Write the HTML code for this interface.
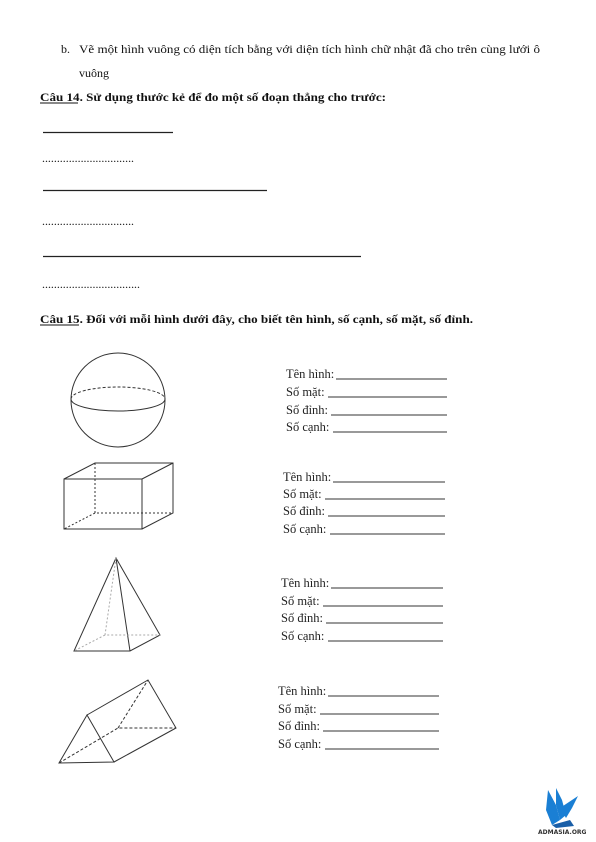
<!DOCTYPE html>
<html><head><meta charset="utf-8"><style>
html,body{margin:0;padding:0;background:#fff;}
svg{display:block}
.t{font-family:"Liberation Serif",serif;font-size:12px;fill:#111}
.b{font-weight:bold}
.l{font-family:"Liberation Serif","DejaVu Serif",serif;font-size:12.5px;fill:#222}
</style></head><body>
<svg width="596" height="842" viewBox="0 0 596 842" xmlns="http://www.w3.org/2000/svg">
<text class="t" x="61" y="53">b.</text>
<text class="t" x="79" y="53" textLength="461" lengthAdjust="spacingAndGlyphs">Vẽ một hình vuông có diện tích bằng với diện tích hình chữ nhật đã cho trên cùng lưới ô</text>
<text class="t" x="79" y="77">vuông</text>
<text class="t b" x="40" y="101" textLength="346" lengthAdjust="spacingAndGlyphs">Câu 14. Sử dụng thước kẻ để đo một số đoạn thẳng cho trước:</text>
<line x1="40" y1="103" x2="78" y2="103" stroke="#111" stroke-width="1"/>
<g stroke="#222" stroke-width="1.3">
<line x1="43" y1="132.5" x2="173" y2="132.5"/>
<line x1="43" y1="190.5" x2="267" y2="190.5"/>
<line x1="43" y1="256.5" x2="361" y2="256.5"/>
</g>
<text class="t" x="42" y="162" textLength="92" lengthAdjust="spacingAndGlyphs">...............................</text>
<text class="t" x="42" y="225" textLength="92" lengthAdjust="spacingAndGlyphs">...............................</text>
<text class="t" x="42" y="288" textLength="98" lengthAdjust="spacingAndGlyphs">.................................</text>
<text class="t b" x="40" y="323" textLength="433" lengthAdjust="spacingAndGlyphs">Câu 15. Đối với mỗi hình dưới đây, cho biết tên hình, số cạnh, số mặt, số đỉnh.</text>
<line x1="40" y1="325" x2="79" y2="325" stroke="#111" stroke-width="1"/>

<g fill="none" stroke="#333" stroke-width="1">
<circle cx="118" cy="400" r="47"/>
<path d="M71 399 A47 12 0 0 1 165 399" stroke-dasharray="3,2" transform="translate(0,0)"/>
<path d="M71 399 A47 12 0 0 0 165 399" stroke="none"/>
<path d="M165 399 A47 12 0 0 1 71 399"/>
<rect x="64" y="479" width="78" height="50"/>
<path d="M64 479 L95 463 L173 463 L173 513 L142 529 M142 479 L173 463"/>
<path d="M95 463 L95 513 L173 513 M95 513 L64 529" stroke-dasharray="2,2"/>
<path d="M116 558 L74 651 L130 651 L160 635 Z M116 558 L130 651"/>
<path d="M116 558 L105 635 L160 635 M105 635 L74 651" stroke="#aaa" stroke-dasharray="2,2"/>
<path d="M59 763 L87 715 L114 762 Z M87 715 L148 680 L176 728 L114 762"/>
<path d="M59 763 L118 728 L176 728 M118 728 L148 680" stroke-dasharray="3,2"/>
</g>

<g class="l">
<text x="286" y="378">Tên hình:</text><text x="286" y="396">Số mặt:</text><text x="286" y="414">Số đỉnh:</text><text x="286" y="431">Số cạnh:</text>
<text x="283" y="481">Tên hình:</text><text x="283" y="498">Số mặt:</text><text x="283" y="515">Số đỉnh:</text><text x="283" y="533">Số cạnh:</text>
<text x="281" y="587">Tên hình:</text><text x="281" y="605">Số mặt:</text><text x="281" y="622">Số đỉnh:</text><text x="281" y="640">Số cạnh:</text>
<text x="278" y="695">Tên hình:</text><text x="278" y="713">Số mặt:</text><text x="278" y="730">Số đỉnh:</text><text x="278" y="748">Số cạnh:</text>
</g>
<g stroke="#333" stroke-width="0.9">
<line x1="336" y1="379" x2="447" y2="379"/><line x1="328" y1="397" x2="447" y2="397"/><line x1="331" y1="415" x2="447" y2="415"/><line x1="333" y1="432" x2="447" y2="432"/>
<line x1="333" y1="482" x2="445" y2="482"/><line x1="325" y1="499" x2="445" y2="499"/><line x1="328" y1="516" x2="445" y2="516"/><line x1="330" y1="534" x2="445" y2="534"/>
<line x1="331" y1="588" x2="443" y2="588"/><line x1="323" y1="606" x2="443" y2="606"/><line x1="326" y1="623" x2="443" y2="623"/><line x1="328" y1="641" x2="443" y2="641"/>
<line x1="328" y1="696" x2="439" y2="696"/><line x1="320" y1="714" x2="439" y2="714"/><line x1="323" y1="731" x2="439" y2="731"/><line x1="325" y1="749" x2="439" y2="749"/>
</g>

<g fill="#1a7fd4">
<path d="M548 790 L556 805 L560 820 L552 825 L546 810 Z"/>
<path d="M556 788 L562 800 L566 815 L560 820 L556 805 Z"/>
<path d="M560 808 L578 796 L572 808 L566 818 Z"/>
<path d="M552 825 L570 820 L574 826 L556 828 Z" fill="#1a5fa8"/>
</g>
<text x="538" y="834" font-family="'DejaVu Sans',sans-serif" font-size="6" font-weight="bold" fill="#333">ADMASIA.ORG</text>
</svg>
</body></html>
